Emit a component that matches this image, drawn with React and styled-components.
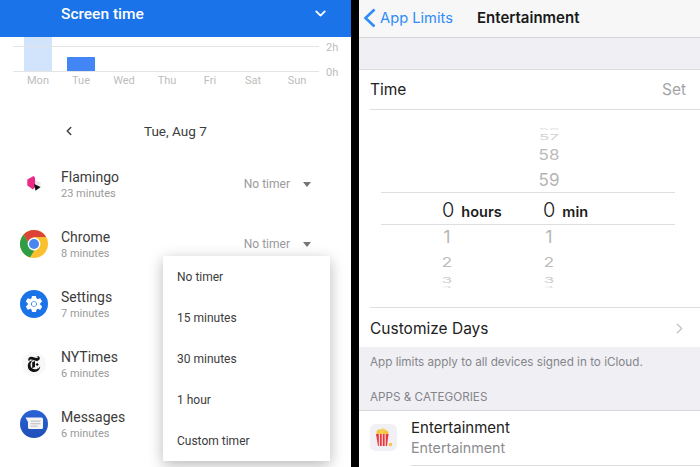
import styled, { createGlobalStyle } from "styled-components";
import { SiNewyorktimes } from "react-icons/si";
import { FiChevronLeft, FiChevronDown, FiChevronRight } from "react-icons/fi";
import { IoMdSettings } from "react-icons/io";

const Global = createGlobalStyle`
  html, body { margin: 0; padding: 0; background: #000; }
  * { box-sizing: border-box; }
`;

const Page = styled.div`
  width: 700px;
  height: 467px;
  display: flex;
  overflow: hidden;
  background: #000;
`;

const AndroidPane = styled.div`
  position: relative;
  width: 351px;
  height: 467px;
  background: #fff;
  font-family: Roboto, sans-serif;
  overflow: hidden;
`;

const Header = styled.div`
  height: 37px;
  padding: 0 22px 10px 61px;
  display: flex;
  align-items: center;
  justify-content: space-between;
  background: #1a73e8;
  color: #fff;
  font-size: 15.5px;
  font-weight: 500;
`;

const Chart = styled.svg`
  display: block;
  width: 351px;
  height: 51px;
  font-family: Roboto, sans-serif;
  font-size: 11px;
  fill: #bdbdbd;
`;

const DateRow = styled.div`
  height: 40px;
  margin: 23px 0 3px;
  padding-left: 62px;
  display: flex;
  align-items: center;
  gap: 68px;
  color: #3c3c3c;
  font-size: 13.5px;
`;

const AppRow = styled.div`
  height: 60px;
  padding: 0 40px 0 20px;
  display: flex;
  align-items: center;
`;

const AppIcon = styled.div`
  width: 28px;
  height: 28px;
  margin-right: 13px;
  flex: none;
  display: flex;
  align-items: center;
  justify-content: center;
`;

const AppInfo = styled.div`
  flex: 1;
  padding-top: 2px;
  display: flex;
  flex-direction: column;
  gap: 1px;
`;

const AppName = styled.div`
  color: #3c3c3c;
  font-size: 14px;
  line-height: 17px;
`;

const AppUsage = styled.div`
  color: #9a9a9a;
  font-size: 11px;
  line-height: 14px;
`;

const Timer = styled.div`
  display: flex;
  align-items: center;
  gap: 13px;
  color: #9a9a9a;
  font-size: 12px;
`;

const Caret = styled.span`
  width: 0;
  height: 0;
  border-left: 4.5px solid transparent;
  border-right: 4.5px solid transparent;
  border-top: 5px solid #757575;
`;

const Menu = styled.div`
  position: absolute;
  left: 163px;
  top: 256px;
  width: 167px;
  height: 205px;
  display: flex;
  flex-direction: column;
  background: #fff;
  box-shadow: 0 4px 14px rgba(0, 0, 0, 0.28);
`;

const MenuItem = styled.div`
  height: 41px;
  padding-left: 14px;
  display: flex;
  align-items: center;
  color: #3c3c3c;
  font-size: 12px;
`;

const Divider = styled.div`
  width: 8px;
  flex: none;
  background: #000;
`;

const IosPane = styled.div`
  flex: 1;
  height: 467px;
  background: #efeff4;
  font-family: Inter, sans-serif;
  overflow: hidden;
`;

const NavBar = styled.div`
  height: 38px;
  padding: 0 0 2px 4px;
  display: flex;
  align-items: center;
  background: #f7f7f8;
  border-bottom: 1px solid #d6d6da;
`;

const BackLink = styled.div`
  display: flex;
  align-items: center;
  gap: 3px;
  width: 114px;
  color: #2f8cf7;
  font-size: 14.7px;
`;

const NavTitle = styled.div`
  color: #1a1a1a;
  font-size: 15px;
  font-weight: 600;
`;

const Band = styled.div`
  height: 32px;
  border-bottom: 1px solid #dcdce0;
`;

const Card = styled.div`
  background: #fff;
`;

const TimeRow = styled.div`
  height: 40px;
  margin-left: 11px;
  padding-right: 14px;
  display: flex;
  align-items: center;
  justify-content: space-between;
  border-bottom: 1px solid #dedee0;
  color: #222;
  font-size: 15.5px;
`;

const SetLabel = styled.span`
  color: #a4a4a8;
`;

const Picker = styled.div`
  height: 198px;
  margin-left: 11px;
  padding: 17px 25px 0 11px;
  border-bottom: 1px solid #dedee0;
`;

const WheelRow = styled.div`
  height: ${(p) => p.$h}px;
  padding-left: 53px;
  display: grid;
  grid-template-columns: 102px 26px;
  align-items: center;
  color: #b4b4b4;
  opacity: ${(p) => p.$fade};
`;

const WheelCell = styled.div`
  width: 26px;
  height: ${(p) => p.$h}px;
  text-align: center;
  font-size: 17px;
  line-height: ${(p) => p.$h}px;
  transform: scaleY(${(p) => p.$squash});
`;

const Selected = styled.div`
  height: 33px;
  padding: 2px 0 0 61px;
  display: grid;
  grid-template-columns: 101px 1fr;
  align-items: center;
  border-top: 1px solid #dedee0;
  border-bottom: 1px solid #dedee0;
  color: #1c1c1c;
`;

const SelectedCell = styled.div`
  display: flex;
  align-items: baseline;
  gap: 7px;
`;

const BigZero = styled.span`
  font-size: 20px;
  font-weight: 300;
`;

const Unit = styled.span`
  font-size: 14.5px;
  font-weight: 600;
`;

const DaysRow = styled.div`
  height: 39px;
  margin-left: 11px;
  padding: 1px 12px 0 0;
  display: flex;
  align-items: center;
  justify-content: space-between;
  color: #222;
  font-size: 15.5px;
`;

const Footnote = styled.div`
  height: 30px;
  padding-left: 11px;
  display: flex;
  align-items: center;
  color: #85858a;
  font-size: 11.7px;
`;

const SectionHead = styled.div`
  height: 34px;
  padding: 7px 0 0 11px;
  display: flex;
  align-items: center;
  color: #85858a;
  font-size: 11.7px;
  border-bottom: 1px solid #d6d6da;
`;

const CategoryRow = styled.div`
  height: 56px;
  padding-left: 11px;
  display: flex;
  align-items: flex-start;
  gap: 14px;
  background: #fff;
`;

const CategoryIcon = styled.div`
  width: 27px;
  height: 27px;
  margin-top: 13px;
  flex: none;
  border-radius: 6px;
  background: #f0f0f5;
  display: flex;
  align-items: center;
  justify-content: center;
`;

const CategoryInfo = styled.div`
  flex: 1;
  height: 55px;
  padding-bottom: 1px;
  display: flex;
  flex-direction: column;
  justify-content: center;
  gap: 2.5px;
  border-bottom: 1px solid #dedee0;
`;

const CategoryName = styled.div`
  color: #222;
  font-size: 15px;
  line-height: 19px;
`;

const CategorySub = styled.div`
  color: #8c8c90;
  font-size: 14.3px;
  line-height: 18px;
`;

const NytBadge = styled.div`
  width: 24px;
  height: 24px;
  border-radius: 50%;
  background: #f8f8f8;
  display: flex;
  align-items: center;
  justify-content: center;
`;

function BackChevron() {
  return (
    <svg width="14" height="20" viewBox="0 0 14 20">
      <polyline points="11.5,1.5 2.5,10 11.5,18.5" fill="none" stroke="#2f8cf7" strokeWidth="2.6" />
    </svg>
  );
}

function FlamingoIcon() {
  return (
    <svg width="28" height="28" viewBox="0 0 28 28">
      <polygon points="15,10 20.7,12.5 20.7,15.5 15,15" fill="#e8e8e8" />
      <polygon points="13.5,6 15,7.5 15,17 13,19.5 7.3,15.5 7.3,9.5" fill="#ec2a86" />
      <polygon points="14,14 20.7,17 15.5,20.7" fill="#111" />
    </svg>
  );
}

function ChromeIcon() {
  return (
    <svg width="28" height="28" viewBox="0 0 28 28">
      <circle cx="14" cy="14" r="14" fill="#fbc02d" />
      <path d="M14 0A14 14 0 0 1 26.1 7L14 7L7.9 12L3.6 4.6A14 14 0 0 1 14 0Z" fill="#db4437" />
      <path d="M3.6 4.6L9.2 14.5L14 21L10 27.4A14 14 0 0 1 3.6 4.6Z" fill="#2e9d46" />
      <circle cx="14" cy="14" r="6.4" fill="#fff" />
      <circle cx="14" cy="14" r="5" fill="#4a86ee" />
    </svg>
  );
}

function SettingsIcon() {
  return (
    <svg width="28" height="28" viewBox="0 0 28 28">
      <circle cx="14" cy="14" r="14" fill="#1a73e8" />
      <IoMdSettings x="4" y="4" size="20" color="#fff" />
      <circle cx="14" cy="14" r="2.2" fill="#fff" />
    </svg>
  );
}

function NytIcon() {
  return (
    <NytBadge>
      <SiNewyorktimes size={16} color="#111" />
    </NytBadge>
  );
}

function MessagesIcon() {
  return (
    <svg width="28" height="28" viewBox="0 0 28 28">
      <defs>
        <linearGradient id="msgBlue" x1="0" y1="0" x2="0" y2="1">
          <stop offset="0" stopColor="#2a62d6" />
          <stop offset="1" stopColor="#1f4fb8" />
        </linearGradient>
      </defs>
      <circle cx="14" cy="14" r="14" fill="url(#msgBlue)" />
      <path d="M5.5 7.5H21.5A1.5 1.5 0 0 1 23 9V17.5A1.5 1.5 0 0 1 21.5 19H9.5A1.5 1.5 0 0 1 8 17.5V12Z" fill="#f4f4f4" />
      <rect x="10.5" y="10.5" width="10" height="1.3" fill="#c9c9c9" />
      <rect x="10.5" y="13" width="10" height="1.3" fill="#c9c9c9" />
      <rect x="10.5" y="15.5" width="7" height="1.3" fill="#c9c9c9" />
    </svg>
  );
}

function PopcornIcon() {
  return (
    <svg width="27" height="27" viewBox="0 0 27 27">
      <circle cx="9.5" cy="8.5" r="3" fill="#f4c542" />
      <circle cx="13" cy="7.5" r="3" fill="#f6cf55" />
      <circle cx="16" cy="9" r="2.6" fill="#f4c542" />
      <polygon points="6,10 18.5,10 17,22 8,22" fill="#e8383d" />
      <rect x="8.8" y="10" width="1.2" height="12" fill="#fbd7d7" />
      <rect x="11.7" y="10" width="1.2" height="12" fill="#fbd7d7" />
      <rect x="14.6" y="10" width="1.2" height="12" fill="#fbd7d7" />
      <circle cx="20.5" cy="20.5" r="1.7" fill="#f4c542" />
    </svg>
  );
}

const days = [
  ["Mon", 38],
  ["Tue", 81],
  ["Wed", 124],
  ["Thu", 167],
  ["Fri", 210],
  ["Sat", 253],
  ["Sun", 297],
];

const apps = [
  { name: "Flamingo", usage: "23 minutes", Icon: FlamingoIcon, timer: true },
  { name: "Chrome", usage: "8 minutes", Icon: ChromeIcon, timer: true },
  { name: "Settings", usage: "7 minutes", Icon: SettingsIcon },
  { name: "NYTimes", usage: "6 minutes", Icon: NytIcon },
  { name: "Messages", usage: "6 minutes", Icon: MessagesIcon },
];

const menuItems = ["No timer", "15 minutes", "30 minutes", "1 hour", "Custom timer"];

const wheelAbove = [
  { h: 5, text: "56", squash: 0.15, fade: 0.4 },
  { h: 10, text: "57", squash: 0.45, fade: 0.6 },
  { h: 26, text: "58", squash: 0.85, fade: 0.9 },
  { h: 24, text: "59", squash: 1, fade: 1 },
];

const wheelBelow = [
  { h: 25, text: "1", squash: 1, fade: 1 },
  { h: 25, text: "2", squash: 0.8, fade: 0.9 },
  { h: 10, text: "3", squash: 0.45, fade: 0.7 },
  { h: 5, text: "4", squash: 0.15, fade: 0.4 },
];

function App() {
  return (
    <Page>
      <Global />
      <AndroidPane>
        <Header>
          <span>Screen time</span>
          <FiChevronDown size={17} strokeWidth={2.5} />
        </Header>
        <Chart viewBox="0 0 351 51">
          <rect x="24" y="0" width="28" height="34" fill="#d2e3fc" />
          <rect x="67" y="20" width="28" height="14.5" rx="1" fill="#4285f4" />
          <line x1="13" x2="319" y1="9.5" y2="9.5" stroke="#e4e4e4" />
          <line x1="13" x2="319" y1="34.5" y2="34.5" stroke="#e4e4e4" />
          <text x="326" y="13.5">2h</text>
          <text x="326" y="38.5">0h</text>
          {days.map(([label, x]) => (
            <text key={label} x={x} y="47" textAnchor="middle">{label}</text>
          ))}
        </Chart>
        <DateRow>
          <FiChevronLeft size={14} strokeWidth={2.5} />
          <span>Tue, Aug 7</span>
        </DateRow>
        {apps.map(({ name, usage, Icon, timer }) => (
          <AppRow key={name}>
            <AppIcon><Icon /></AppIcon>
            <AppInfo>
              <AppName>{name}</AppName>
              <AppUsage>{usage}</AppUsage>
            </AppInfo>
            {timer && (
              <Timer>
                No timer
                <Caret />
              </Timer>
            )}
          </AppRow>
        ))}
        <Menu>
          {menuItems.map((item) => (
            <MenuItem key={item}>{item}</MenuItem>
          ))}
        </Menu>
      </AndroidPane>
      <Divider />
      <IosPane>
        <NavBar>
          <BackLink>
            <BackChevron />
            App Limits
          </BackLink>
          <NavTitle>Entertainment</NavTitle>
        </NavBar>
        <Band />
        <Card>
          <TimeRow>
            <span>Time</span>
            <SetLabel>Set</SetLabel>
          </TimeRow>
          <Picker>
            {wheelAbove.map((r) => (
              <WheelRow key={r.text} $h={r.h} $fade={r.fade}>
                <span />
                <WheelCell $h={r.h} $squash={r.squash}>{r.text}</WheelCell>
              </WheelRow>
            ))}
            <Selected>
              <SelectedCell><BigZero>0</BigZero><Unit>hours</Unit></SelectedCell>
              <SelectedCell><BigZero>0</BigZero><Unit>min</Unit></SelectedCell>
            </Selected>
            {wheelBelow.map((r) => (
              <WheelRow key={r.text} $h={r.h} $fade={r.fade}>
                <WheelCell $h={r.h} $squash={r.squash}>{r.text}</WheelCell>
                <WheelCell $h={r.h} $squash={r.squash}>{r.text}</WheelCell>
              </WheelRow>
            ))}
          </Picker>
          <DaysRow>
            <span>Customize Days</span>
            <FiChevronRight size={17} color="#c4c4c8" />
          </DaysRow>
        </Card>
        <Footnote>App limits apply to all devices signed in to iCloud.</Footnote>
        <SectionHead>APPS &amp; CATEGORIES</SectionHead>
        <CategoryRow>
          <CategoryIcon><PopcornIcon /></CategoryIcon>
          <CategoryInfo>
            <CategoryName>Entertainment</CategoryName>
            <CategorySub>Entertainment</CategorySub>
          </CategoryInfo>
        </CategoryRow>
      </IosPane>
    </Page>
  );
}

export default App;
